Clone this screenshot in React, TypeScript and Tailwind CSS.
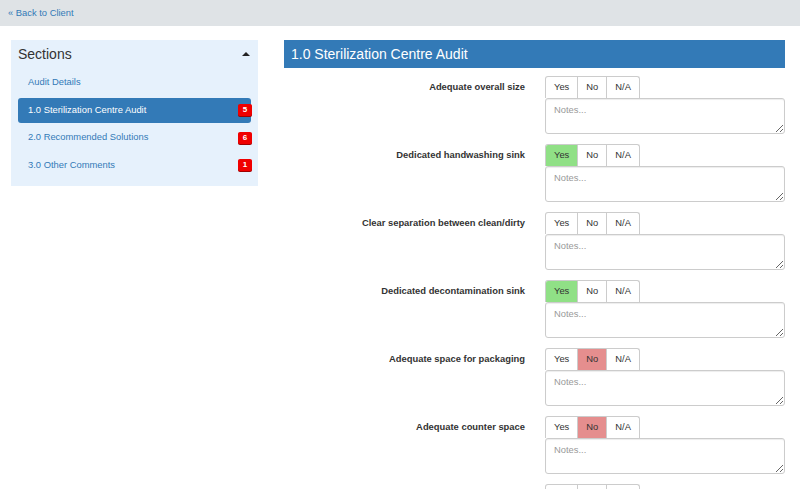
import React from 'react';

type Answer = 'yes' | 'no' | 'na' | null;

const questions: { label: string; answer: Answer }[] = [
    { label: 'Adequate overall size', answer: null },
    { label: 'Dedicated handwashing sink', answer: 'yes' },
    { label: 'Clear separation between clean/dirty', answer: null },
    { label: 'Dedicated decontamination sink', answer: 'yes' },
    { label: 'Adequate space for packaging', answer: 'no' },
    { label: 'Adequate counter space', answer: 'no' },
    { label: 'Adequate storage space', answer: null },
];

const sections = [
    { name: 'Audit Details', count: 0 },
    { name: '1.0 Sterilization Centre Audit', count: 5, active: true },
    { name: '2.0 Recommended Solutions', count: 6 },
    { name: '3.0 Other Comments', count: 1 },
];

const Badge: React.FC<{ n: number }> = ({ n }) => (
    <span className="mr-[-1px] flex h-[12px] min-w-[14px] items-center justify-center rounded-[2px] bg-[#f00000] px-[3px] text-[8px] font-bold leading-none text-white shadow-[0_1px_0_#a00000]">
        {n}
    </span>
);

const Sidebar: React.FC = () => (
    <div className="w-[247px] bg-[#e6f1fc] px-[7px] pb-[8px]">
        <div className="flex h-[28px] items-center justify-between">
            <span className="text-[14px] text-[#333]">Sections</span>
            <span className="mr-[1px] h-0 w-0 border-x-[4px] border-b-[4px] border-x-transparent border-b-[#222]" />
        </div>
        <div className="mt-[2px] flex flex-col gap-[2.5px]">
            {sections.map((s) => (
                <div
                    key={s.name}
                    className={
                        s.active
                            ? 'flex h-[25px] items-center justify-between rounded-[3px] bg-[#337ab7] pl-[10px] text-white'
                            : 'flex h-[25px] items-center justify-between pl-[10px] text-[#337ab7]'
                    }
                >
                    <span>{s.name}</span>
                    {s.count > 0 && <Badge n={s.count} />}
                </div>
            ))}
        </div>
    </div>
);

const Toggle: React.FC<{ value: Answer }> = ({ value }) => {
    const base = 'flex h-full items-center px-[8px] text-[#333]';
    return (
        <div className="flex h-[22px] w-fit overflow-hidden rounded-t-[3px] border border-b-0 border-[#ccc] bg-white">
            <span className={value === 'yes' ? base + ' bg-[#90e086]' : base}>Yes</span>
            <span className={(value === 'no' ? base + ' bg-[#e58e8e]' : base) + ' border-l border-[#ccc]'}>No</span>
            <span className={base + ' border-l border-[#ccc]'}>N/A</span>
        </div>
    );
};

const QuestionRow: React.FC<{ label: string; answer: Answer }> = ({ label, answer }) => (
    <div className="mb-[10px] flex gap-[20px]">
        <div className="flex h-[22px] w-[241px] items-center justify-end font-bold text-[#333]">{label}</div>
        <div className="w-[240px]">
            <Toggle value={answer} />
            <textarea
                placeholder="Notes..."
                className="block h-[36px] w-full rounded-[3px] border border-[#ccc] px-[8px] py-[4px] text-[9.4px] text-[#333] shadow-[inset_0_1px_1px_rgba(0,0,0,0.075)] outline-none placeholder:text-[#999]"
            />
        </div>
    </div>
);

export default function App() {
    return (
        <div className="h-[489px] w-[800px] overflow-hidden bg-white font-['Liberation_Sans',Arial,sans-serif] text-[9.4px]">
            <div className="flex h-[26px] items-center bg-[#dfe3e6] px-[8px] text-[#337ab7]">« Back to Client</div>
            <div className="flex pt-[14px]">
                <div className="ml-[11px]">
                    <Sidebar />
                </div>
                <div className="ml-[26px] w-[501px]">
                    <div className="flex h-[28px] items-center bg-[#337ab7] px-[7px] text-[14px] text-white">
                        1.0 Sterilization Centre Audit
                    </div>
                    <div className="mt-[8px]">
                        {questions.map((q) => (
                            <QuestionRow key={q.label} label={q.label} answer={q.answer} />
                        ))}
                    </div>
                </div>
            </div>
        </div>
    );
}
